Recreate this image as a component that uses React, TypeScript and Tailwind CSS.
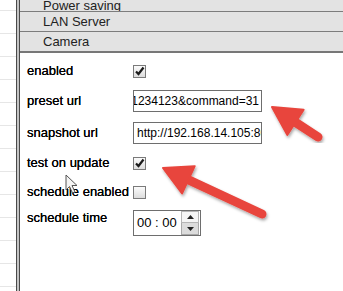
import React from 'react';

const SIDE_LINES = Array.from({ length: 12 });

const Checkbox: React.FC<{ checked?: boolean }> = ({ checked }) => (
    <span className="flex h-[13px] w-[13px] items-center justify-center border border-[#7a7a7a] bg-gradient-to-b from-[#fbfbfb] to-[#dcdcdc]">
        {checked && (
            <svg width="11" height="11" viewBox="0 0 11 11">
                <path d="M2 5.5 L4.5 8 L9.5 1.5" fill="none" stroke="#1a1a1a" strokeWidth="2.2" />
            </svg>
        )}
    </span>
);

const HeaderRow: React.FC<{ label: string; className?: string }> = ({ label, className = '' }) => (
    <div className={`flex h-[20px] shrink-0 items-center border-b border-[#7d7d7d] bg-[#e3e3e3] pl-[23px] text-[13px] text-[#222] ${className}`}>
        {label}
    </div>
);

const Arrow: React.FC<{ tip: [number, number]; tail: [number, number] }> = ({ tip, tail }) => {
    const dx = tail[0] - tip[0];
    const dy = tail[1] - tip[1];
    const len = Math.hypot(dx, dy);
    const ux = dx / len;
    const uy = dy / len;
    const headLen = 28;
    const half = 15;
    const bx = tip[0] + ux * headLen;
    const by = tip[1] + uy * headLen;
    const c1 = [bx - uy * half, by + ux * half];
    const c2 = [bx + uy * half, by - ux * half];
    return (
        <g filter="url(#arrowShadow)">
            <line x1={bx - ux * 4} y1={by - uy * 4} x2={tail[0]} y2={tail[1]} stroke="#e8453c" strokeWidth="9" strokeLinecap="round" />
            <polygon points={`${tip[0]},${tip[1]} ${c1[0]},${c1[1]} ${c2[0]},${c2[1]}`} fill="#e8453c" stroke="#e8453c" strokeWidth="2" strokeLinejoin="round" />
        </g>
    );
};

export default function App() {
    return (
        <div className="relative h-[291px] w-[343px] overflow-hidden bg-white font-['Liberation_Sans',Arial,sans-serif]">
            <div className="flex h-full">
                {/* list panel edge */}
                <div className="flex w-[16px] shrink-0 flex-col">
                    <div className="h-[11px] shrink-0 border-b border-[#e6e6e6]" />
                    {SIDE_LINES.map((_, i) => (
                        <div key={i} className="h-[23px] shrink-0 border-b border-[#e6e6e6]" />
                    ))}
                </div>
                <div className="w-[4px] shrink-0 border-x border-[#4a4a4a] bg-[#c4c4c4]" />

                <div className="flex min-w-0 flex-1 flex-col">
                    <div className="flex h-[12px] shrink-0 items-end overflow-hidden border-b border-[#7d7d7d] bg-[#e3e3e3] pl-[23px]">
                        <span className="mb-[-2px] text-[13px] leading-[15px] text-[#222]">Power saving</span>
                    </div>
                    <HeaderRow label="LAN Server" />
                    <HeaderRow label="Camera" className="h-[21px] border-b-2 border-[#777]" />

                    <div className="flex flex-col pl-[7px] text-[13px] text-black [text-shadow:0_0_0.5px_#000]">
                        <div className="mt-[7px] flex h-[22px] items-center">
                            <span className="w-[106px]">enabled</span>
                            <Checkbox checked />
                        </div>
                        <div className="mt-[8px] flex h-[22px] items-center">
                            <span className="w-[106px]">preset url</span>
                            <div className="flex h-[22px] w-[129px] items-center justify-end overflow-hidden whitespace-nowrap border border-[#6e6e6e] pr-[2px] text-[12px] [text-shadow:none]">
                                1234123&amp;command=31
                            </div>
                        </div>
                        <div className="mt-[10px] flex h-[22px] items-center">
                            <span className="w-[106px]">snapshot url</span>
                            <div className="flex h-[22px] w-[129px] items-center overflow-hidden whitespace-nowrap border border-[#6e6e6e] pl-[3px] text-[12px] [text-shadow:none]">
                                http://192.168.14.105:8080
                            </div>
                        </div>
                        <div className="mt-[8px] flex h-[22px] items-center">
                            <span className="w-[106px]">test on update</span>
                            <Checkbox checked />
                        </div>
                        <div className="mt-[7px] flex h-[22px] items-center">
                            <span className="w-[106px]">schedule enabled</span>
                            <Checkbox />
                        </div>
                        <div className="mt-[7px] flex items-start">
                            <span className="w-[106px] leading-[15px]">schedule time</span>
                            <div className="flex h-[26px] w-[68px] items-center border border-[#6e6e6e] pl-[3px] [text-shadow:none]">
                                <span className="flex-1 whitespace-nowrap">00 : 00</span>
                                <div className="mr-[1px] flex h-[24px] w-[18px] flex-col">
                                    <div className="flex h-[12px] items-center justify-center border border-[#b5b5b5] bg-[#f5f5f5]">
                                        <svg width="7" height="4" viewBox="0 0 7 4"><path d="M3.5 0 L7 4 L0 4 Z" fill="#222" /></svg>
                                    </div>
                                    <div className="flex h-[12px] items-center justify-center border border-t-0 border-[#a8a8a8] bg-[#dcdcdc]">
                                        <svg width="7" height="4" viewBox="0 0 7 4"><path d="M0 0 L7 0 L3.5 4 Z" fill="#222" /></svg>
                                    </div>
                                </div>
                            </div>
                        </div>
                    </div>
                </div>
            </div>

            {/* annotation overlay */}
            <svg className="pointer-events-none absolute left-0 top-0" width="343" height="291" viewBox="0 0 343 291">
                <defs>
                    <filter id="arrowShadow" x="-20%" y="-20%" width="140%" height="140%">
                        <feDropShadow dx="1" dy="2" stdDeviation="1.5" floodColor="#000" floodOpacity="0.35" />
                    </filter>
                </defs>
                <Arrow tip={[272, 107]} tail={[318, 137]} />
                <Arrow tip={[163, 168]} tail={[262, 214]} />
                <path
                    d="M66 175 L66 190 L69.5 186.5 L72.5 193 L75 192 L72 185.5 L77 185.5 Z"
                    fill="#f4f4f4"
                    stroke="#555"
                    strokeWidth="1"
                    strokeLinejoin="round"
                />
            </svg>
        </div>
    );
}
